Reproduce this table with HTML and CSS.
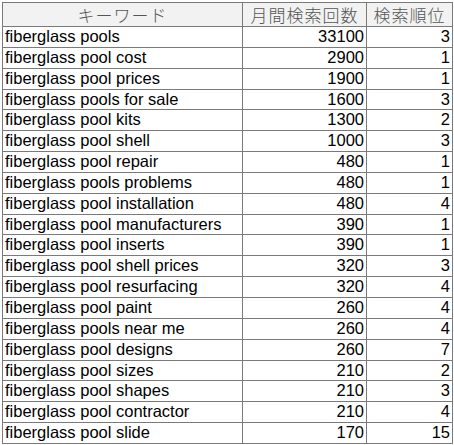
FILE: index.html
```html
<!DOCTYPE html>
<html lang="ja">
<head>
<meta charset="utf-8">
<link rel="stylesheet" href="styles.css">
</head>
<body>
<table class="sheet">
  <colgroup><col class="c-kw"><col class="c-vol"><col class="c-rank"></colgroup>
  <thead>
    <tr><th>キーワード</th><th>月間検索回数</th><th>検索順位</th></tr>
  </thead>
  <tbody>
    <tr><td>fiberglass pools</td><td class="num">33100</td><td class="num">3</td></tr>
    <tr><td>fiberglass pool cost</td><td class="num">2900</td><td class="num">1</td></tr>
    <tr><td>fiberglass pool prices</td><td class="num">1900</td><td class="num">1</td></tr>
    <tr><td>fiberglass pools for sale</td><td class="num">1600</td><td class="num">3</td></tr>
    <tr><td>fiberglass pool kits</td><td class="num">1300</td><td class="num">2</td></tr>
    <tr><td>fiberglass pool shell</td><td class="num">1000</td><td class="num">3</td></tr>
    <tr><td>fiberglass pool repair</td><td class="num">480</td><td class="num">1</td></tr>
    <tr><td>fiberglass pools problems</td><td class="num">480</td><td class="num">1</td></tr>
    <tr><td>fiberglass pool installation</td><td class="num">480</td><td class="num">4</td></tr>
    <tr><td>fiberglass pool manufacturers</td><td class="num">390</td><td class="num">1</td></tr>
    <tr><td>fiberglass pool inserts</td><td class="num">390</td><td class="num">1</td></tr>
    <tr><td>fiberglass pool shell prices</td><td class="num">320</td><td class="num">3</td></tr>
    <tr><td>fiberglass pool resurfacing</td><td class="num">320</td><td class="num">4</td></tr>
    <tr><td>fiberglass pool paint</td><td class="num">260</td><td class="num">4</td></tr>
    <tr><td>fiberglass pools near me</td><td class="num">260</td><td class="num">4</td></tr>
    <tr><td>fiberglass pool designs</td><td class="num">260</td><td class="num">7</td></tr>
    <tr><td>fiberglass pool sizes</td><td class="num">210</td><td class="num">2</td></tr>
    <tr><td>fiberglass pool shapes</td><td class="num">210</td><td class="num">3</td></tr>
    <tr><td>fiberglass pool contractor</td><td class="num">210</td><td class="num">4</td></tr>
    <tr><td>fiberglass pool slide</td><td class="num">170</td><td class="num">15</td></tr>
  </tbody>
</table>
</body>
</html>
```
FILE: styles.css
```css
html, body {
  margin: 0;
  padding: 0;
  background: #ffffff;
}
body {
  padding: 2px 0 0 2px;
}
.sheet {
  border-collapse: collapse;
  table-layout: fixed;
  width: 450px;
  font-family: "Liberation Sans", Arial, sans-serif;
  font-size: 16.5px;
  color: #000;
}
.c-kw { width: 240px; }
.c-vol { width: 124px; }
.c-rank { width: 86px; }
.sheet th, .sheet td {
  border: 1px solid #7a7a7a;
  padding: 0 2px 0 2px;
  white-space: nowrap;
  overflow: hidden;
}
.sheet th {
  height: 23px;
  background: #f2f2f2;
  font-family: "Noto Sans CJK JP", sans-serif;
  font-weight: 300;
  font-size: 17px;
  letter-spacing: 1px;
  color: #555;
  text-align: center;
  line-height: 23px;
}
.sheet td {
  height: 19.85px;
  line-height: 19.85px;
}
.sheet td.num {
  text-align: right;
  padding-right: 2px;
}
```
